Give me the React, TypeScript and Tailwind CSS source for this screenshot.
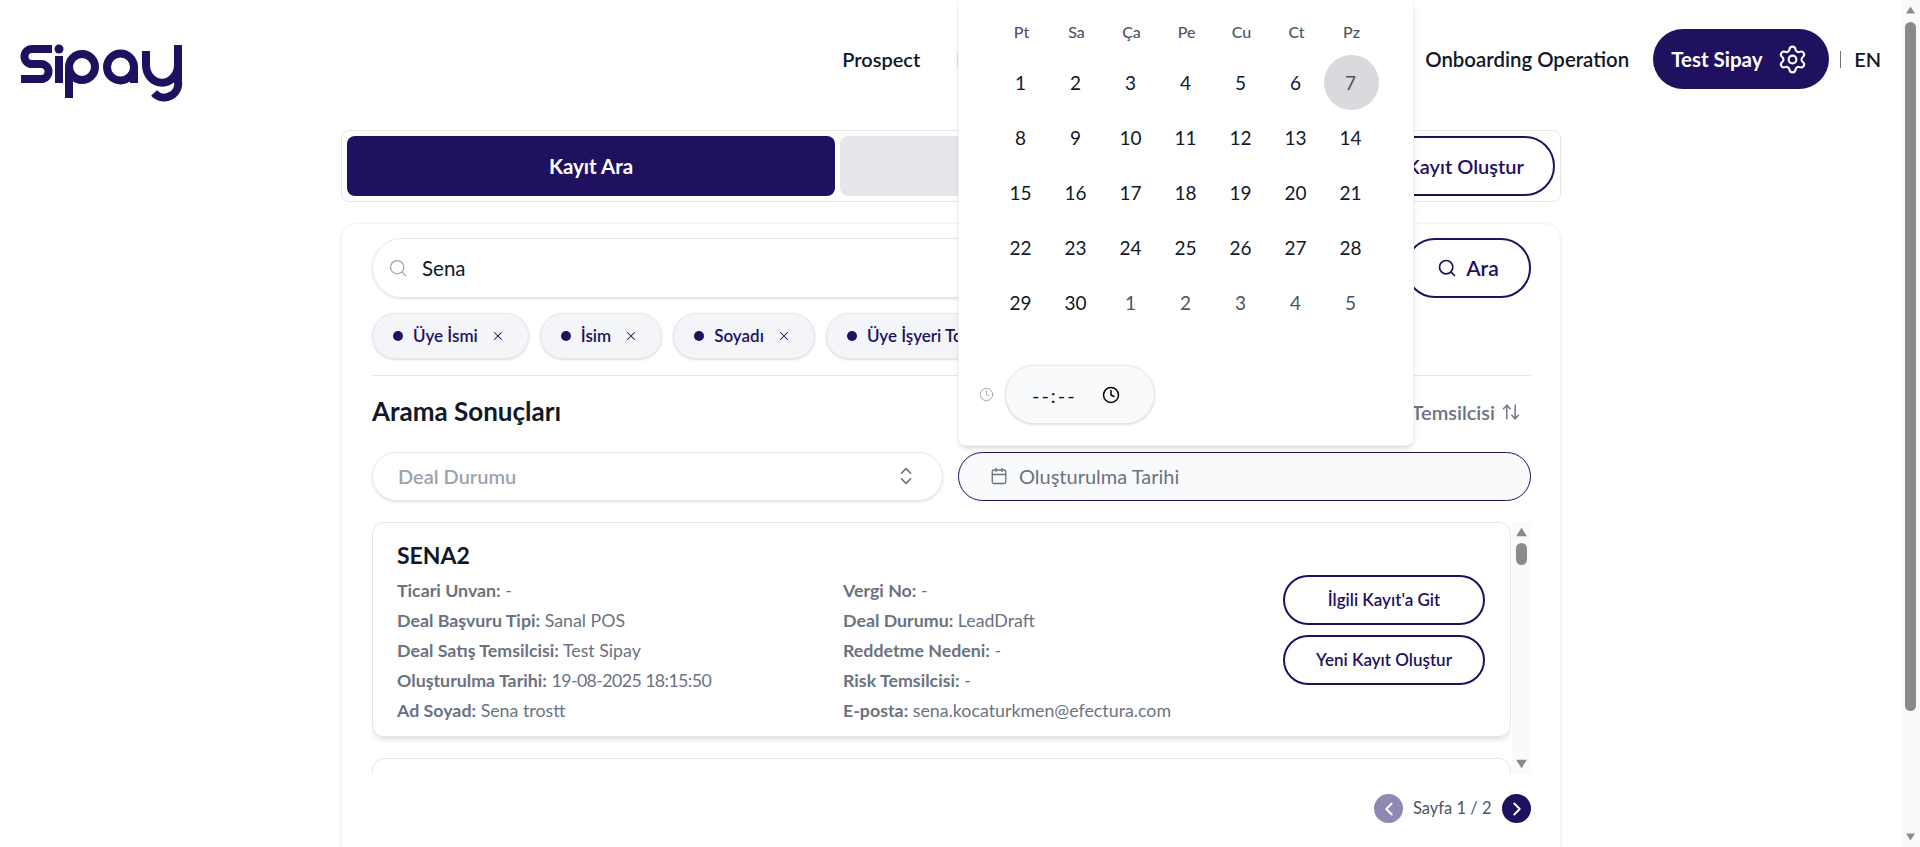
import { ArrowUpDown, Calendar, ChevronLeft, ChevronRight, ChevronsUpDown, Clock, Search, Settings, X } from "lucide-react";

const chips = ["Üye İsmi", "İsim", "Soyadı", "Üye İşyeri Toplam"];
const weekDays = ["Pt", "Sa", "Ça", "Pe", "Cu", "Ct", "Pz"];
const days = Array.from({ length: 30 }, (_, i) => i + 1);
const left = [
  ["Ticari Unvan:", "-"],
  ["Deal Başvuru Tipi:", "Sanal POS"],
  ["Deal Satış Temsilcisi:", "Test Sipay"],
  ["Oluşturulma Tarihi:", "19-08-2025 18:15:50"],
  ["Ad Soyad:", "Sena trostt"],
];
const right = [
  ["Vergi No:", "-"],
  ["Deal Durumu:", "LeadDraft"],
  ["Reddetme Nedeni:", "-"],
  ["Risk Temsilcisi:", "-"],
  ["E-posta:", "sena.kocaturkmen@efectura.com"],
];

function Logo() {
  return (
    <svg width="180" height="75" viewBox="0 0 180 75" fill="none" stroke="#201160" strokeWidth="8">
      <path d="M42 14H22A7.5 7.5 0 0 0 22 29H31A7.5 7.5 0 0 1 31 44H11" />
      <circle cx="49" cy="14" r="4.5" fill="#201160" stroke="none" />
      <path d="M49 21V48" />
      <circle cx="72" cy="32" r="13" />
      <path d="M59 32V63" />
      <circle cx="110.5" cy="32" r="13.5" />
      <path d="M124 30V48" />
      <path d="M136 16V30A14 15.5 0 0 0 168 30" />
      <path d="M168 10V46A14 14 0 0 1 144 58" />
    </svg>
  );
}

function Tri({ down, size = 13 }: { down?: boolean; size?: number }) {
  return (
    <svg width={size} height={Math.round(size * 0.75)} viewBox="0 0 12 9" fill="#8a8a8a">
      <path d={down ? "M1 0.5H11L6 8.5Z" : "M6 0.5L11 8.5H1Z"} />
    </svg>
  );
}

function Line({ k, v }: { k: string; v: string }) {
  return (
    <div className="h-[30px] text-[17.8px] leading-[30px] text-[#6b7280] whitespace-nowrap">
      <span className="font-bold">{k}</span>{" "}
      <span className={v.includes("2025") ? "tracking-[-0.6px]" : ""}>{v}</span>
    </div>
  );
}

export default function App() {
  return (
    <div className="flex h-[847px] w-full overflow-hidden bg-white font-[Lato,sans-serif] text-[20px] text-[#111827]">
      <div className="relative min-w-0 flex-1">
        <header className="flex h-[130px] items-start">
          <div className="ml-[10px] mt-[35px]">
            <Logo />
          </div>
          <nav className="ml-auto mt-[29px] flex h-[60px] items-center pr-[22px] font-semibold">
            <span className="w-[114px]">Prospect</span>
            <span className="w-[469px]">Deal</span>
            <span className="mr-[24px] whitespace-nowrap text-[20.4px]">Onboarding Operation</span>
            <div className="flex h-[60px] w-[176px] items-center justify-between rounded-full bg-[#201160] pl-[18px] pr-[21px] text-[20.5px] font-bold text-white">
              <span>Test Sipay</span>
              <Settings size={31} strokeWidth={1.6} />
            </div>
            <span className="ml-[11px] h-[17px] w-px bg-[#6b7280]" />
            <span className="ml-[13px]">EN</span>
          </nav>
        </header>

        <main className="ml-[341px] w-[1220px]">
          <div className="flex h-[72px] gap-[5px] rounded-lg border border-[#e5e7eb] p-[5px]">
            <div className="flex w-[488px] items-center justify-center rounded-lg bg-[#201160] text-[20.5px] font-bold text-white">Kayıt Ara</div>
            <div className="flex w-[488px] items-center justify-center rounded-lg bg-[#e5e7eb] font-bold">Kayıt Detay</div>
            <div className="flex flex-1 items-center justify-center rounded-full border-2 border-[#201160] font-semibold text-[#201160]">Yeni Kayıt Oluştur</div>
          </div>

          <section className="mt-[21px] h-[660px] rounded-2xl border border-[#f3f4f6] pl-[30px] pr-[29px] pt-[14px] shadow-sm">
            <div className="flex h-[60px] gap-[10px]">
              <div className="flex flex-1 items-center gap-[14px] rounded-full border border-[#e5e7eb] pl-[15px] shadow-sm">
                <Search size={20} strokeWidth={1.5} className="text-[#9ca3af]" />
                <span className="text-[20.5px]">Sena</span>
              </div>
              <div className="flex w-[126px] items-center justify-center gap-[9px] rounded-full border-2 border-[#201160] text-[21px] font-semibold text-[#201160]">
                <Search size={20} strokeWidth={2} />
                Ara
              </div>
            </div>

            <div className="mt-[15px] flex h-[46px] gap-[11px]">
              {chips.map((c) => (
                <div key={c} className="flex items-center rounded-full border border-[#e5e7eb] bg-[#f4f5f9] pl-[20px] pr-[23px] text-[17px] font-semibold text-[#201160] shadow-sm whitespace-nowrap">
                  <span className="mr-[10px] h-[10px] w-[10px] rounded-full bg-[#201160]" />
                  {c}
                  <X size={14} strokeWidth={1.75} className="ml-[13px]" />
                </div>
              ))}
            </div>

            <div className="mt-[16px] border-t border-[#e5e7eb]" />

            <div className="mt-[18px] flex h-[36px] items-center justify-between pr-[10px]">
              <h2 className="pb-[2px] text-[26px] font-bold">Arama Sonuçları</h2>
              <div className="flex items-center gap-[6px] font-semibold text-[#6b7280]">
                Satış Temsilcisi
                <ArrowUpDown size={20} strokeWidth={1.75} />
              </div>
            </div>

            <div className="mt-[22px] flex h-[49px] gap-[15px]">
              <div className="flex w-[571px] items-center justify-between rounded-full border border-[#e5e7eb] pb-[2px] pl-[25px] pr-[25px] font-semibold text-[#9ca3af] shadow-sm">
                Deal Durumu
                <ChevronsUpDown size={22} strokeWidth={1.75} className="text-[#6b7280]" />
              </div>
              <div className="flex flex-1 items-center gap-[11px] rounded-full border border-[#201160] bg-[#f9fafb] pb-[2px] pl-[31px] text-[#6b7280]">
                <Calendar size={18} strokeWidth={1.75} />
                Oluşturulma Tarihi
              </div>
            </div>

            <div className="mt-[21px] flex h-[252px] overflow-hidden">
              <div className="flex-1 overflow-hidden">
                <div className="flex h-[215px] items-center justify-between rounded-xl border border-[#e5e7eb] pl-[24px] pr-[25px] shadow-md">
                  <div className="self-start pt-[16px]">
                    <div className="text-[23px] font-bold leading-[32px]">SENA2</div>
                    <div className="mt-[4px] flex">
                      <div className="w-[446px]">
                        {left.map(([k, v]) => (
                          <Line key={k} k={k} v={v} />
                        ))}
                      </div>
                      <div>
                        {right.map(([k, v]) => (
                          <Line key={k} k={k} v={v} />
                        ))}
                      </div>
                    </div>
                  </div>
                  <div className="flex w-[202px] flex-col gap-[10px]">
                    <div className="flex h-[50px] items-center justify-center rounded-full border-2 border-[#201160] text-[17px] font-semibold text-[#201160]">İlgili Kayıt'a Git</div>
                    <div className="flex h-[50px] items-center justify-center rounded-full border-2 border-[#201160] text-[17px] font-semibold text-[#201160]">Yeni Kayıt Oluştur</div>
                  </div>
                </div>
                <div className="mt-[21px] h-[100px] rounded-xl border border-[#e5e7eb]" />
              </div>
              <div className="ml-px flex w-[19px] flex-col items-center justify-between bg-[#fafafa] py-[5px]">
                <div className="flex flex-col items-center gap-[6px]">
                  <Tri />
                  <span className="h-[22px] w-[11px] rounded-full bg-[#8a8a8a]" />
                </div>
                <Tri down />
              </div>
            </div>

            <div className="mt-[20px] flex h-[29px] items-center justify-end text-[16.5px] text-[#4b5563]">
              <span className="flex h-[29px] w-[29px] items-center justify-center rounded-full bg-[#9187b3] text-white">
                <ChevronLeft size={22} strokeWidth={2} />
              </span>
              <span className="mx-[10px] w-[79px] whitespace-nowrap pr-[2px] text-center">Sayfa 1 / 2</span>
              <span className="flex h-[29px] w-[29px] items-center justify-center rounded-full bg-[#201160] text-white">
                <ChevronRight size={22} strokeWidth={2} />
              </span>
            </div>
          </section>
        </main>

        <div className="absolute left-[958px] top-0 h-[446px] w-[456px] rounded-b-lg border border-t-0 border-[#f3f4f6] bg-white pl-[35px] pt-[8px] shadow-md">
          <div className="grid w-[385px] grid-cols-7 text-center">
            {weekDays.map((d) => (
              <div key={d} className="flex h-[47px] items-center justify-center text-[16px] font-medium text-[#4b5563]">{d}</div>
            ))}
            {days.map((d) => (
              <div key={d} className={`flex h-[55px] items-center justify-center rounded-full pr-[2px] pt-[2px] text-[19px] ${d === 7 ? "bg-[#d9d9de] text-[#4b5563]" : ""}`}>{d}</div>
            ))}
            {[1, 2, 3, 4, 5].map((d) => (
              <div key={d} className="flex h-[55px] items-center justify-center pr-[2px] pt-[2px] text-[19px] text-[#4b5563]">{d}</div>
            ))}
          </div>
          <div className="-ml-[15px] mt-[35px] flex items-center gap-[11px]">
            <Clock size={15} strokeWidth={1.5} className="text-[#9ca3af]" />
            <div className="flex h-[59px] w-[150px] items-center justify-between rounded-full border border-[#e5e7eb] bg-[#f9fafb] pl-[26px] pr-[34px] shadow-sm">
              <span className="tracking-[2px]">--:--</span>
              <Clock size={18} strokeWidth={2} className="text-black" />
            </div>
          </div>
        </div>
      </div>

      <aside className="flex h-full w-[17px] flex-col justify-between bg-[#fafafa] pb-[6px] pl-[2px] pt-[6px]">
        <div className="flex flex-col gap-[8px]">
          <Tri size={11} />
          <span className="h-[689px] w-[11px] rounded-full bg-[#8a8a8a]" />
        </div>
        <Tri down size={11} />
      </aside>
    </div>
  );
}
